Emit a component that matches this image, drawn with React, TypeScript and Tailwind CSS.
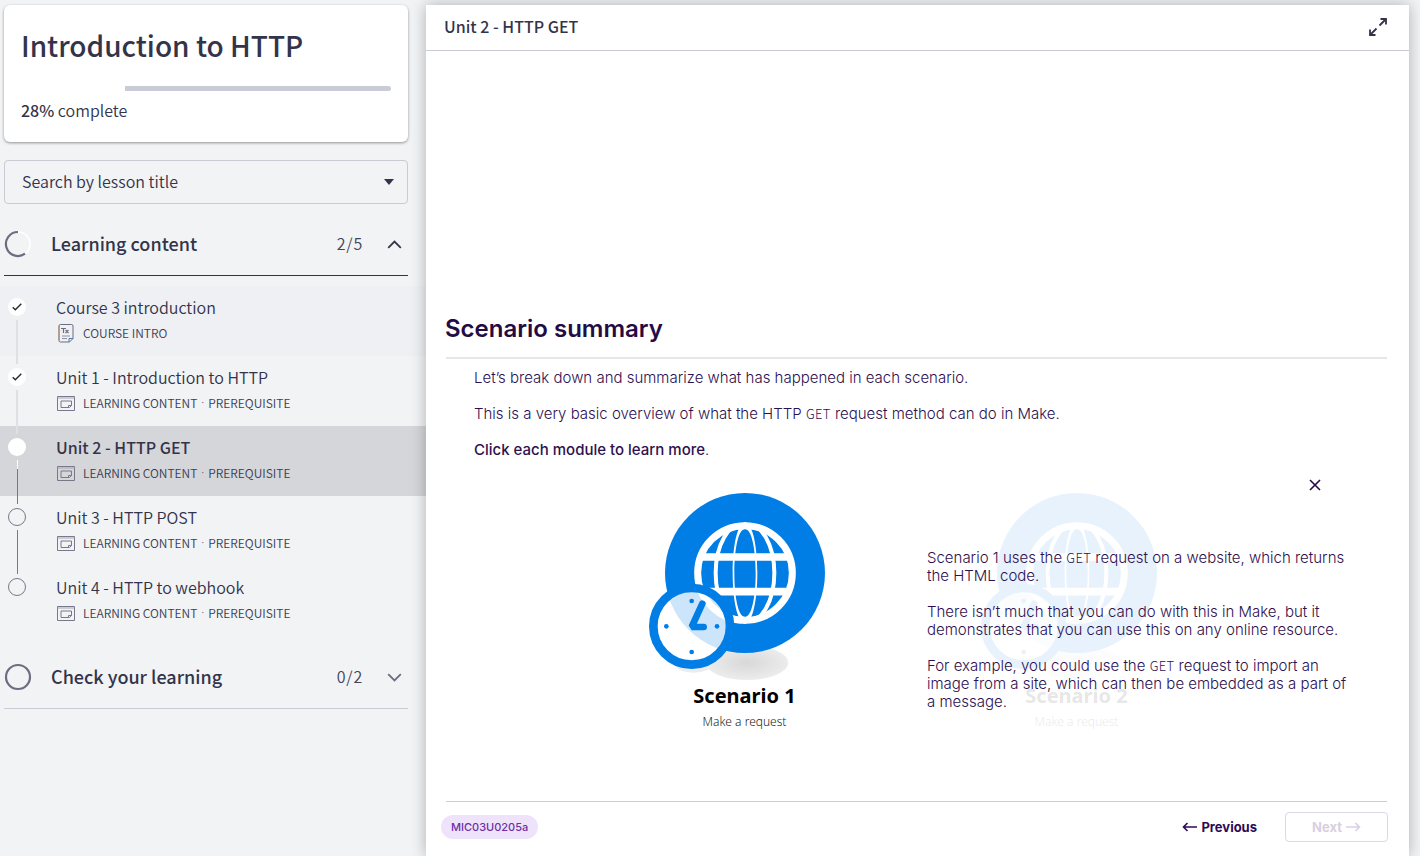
import { Fragment, useId } from "react";

type LessonState = "done" | "current" | "todo";

type Lesson = {
  title: string;
  tags: string[];
  icon: "text" | "content";
  state: LessonState;
  visited?: boolean;
};

const contentTags = ["LEARNING CONTENT", "PREREQUISITE"];

const lessons: Lesson[] = [
  { title: "Course 3 introduction", tags: ["COURSE INTRO"], icon: "text", state: "done", visited: true },
  { title: "Unit 1 - Introduction to HTTP", tags: contentTags, icon: "content", state: "done" },
  { title: "Unit 2 - HTTP GET", tags: contentTags, icon: "content", state: "current" },
  { title: "Unit 3 - HTTP POST", tags: contentTags, icon: "content", state: "todo" },
  { title: "Unit 4 - HTTP to webhook", tags: contentTags, icon: "content", state: "todo" },
];

function TextIcon() {
  return (
    <svg width="16" height="19" viewBox="0 0 16 19" fill="none" stroke="#6b6d80" aria-hidden="true">
      <path d="M2.500.5h11a1.500 1.500 0 0 1 1.500 1.500v12.500l-3.500 3.500H2.500A1.500 1.500 0 0 1 1 16.500V2A1.500 1.500 0 0 1 2.500.5z" />
      <path d="M1 2v14.500" stroke="#b98a6a" />
      <path d="M15 14.500h-4V18" stroke="#4c7fb0" />
      <path d="M3 4.500h5M5.500 4.500v4.500M7.500 6l3 3M10.500 6l-3 3" strokeWidth="1.200" />
      <path d="M4 12h8M4 14.500h5" stroke="#9293a2" />
    </svg>
  );
}

function ContentIcon() {
  return (
    <svg width="18" height="15" viewBox="0 0 18 15" fill="none" stroke="#77798b" aria-hidden="true">
      <path d="M.5.5h17v14H.5z" />
      <path d="M.5 2h17" stroke="#a5a6b3" />
      <path d="M4 5h10.500v4.500l-2 2H4zM14.500 9.500h-3v2" />
    </svg>
  );
}

function Marker({ state }: { state: LessonState }) {
  if (state === "todo") {
    return <span className="size-[18px] shrink-0 rounded-full border border-[#77798b]" />;
  }
  return (
    <span className="flex size-[18px] shrink-0 items-center justify-center rounded-full bg-white">
      {state === "done" && (
        <svg width="10" height="8" viewBox="0 0 10 8" fill="none" stroke="#26272f" strokeWidth="1.400" aria-hidden="true">
          <path d="M.7 4.300L3.300 6.700 9.300.8" />
        </svg>
      )}
    </span>
  );
}

function LessonRow({ lesson, last }: { lesson: Lesson; last: boolean }) {
  const { state } = lesson;
  const background = state === "current" ? "bg-[#d5d6da]" : lesson.visited ? "bg-[#eef0f4]" : "";
  return (
    <li className={`h-[70px] ${background}`}>
      <a href="#lesson" className="flex h-full pl-2">
        <span className="flex w-[18px] flex-col items-center gap-1 pt-3">
          <Marker state={state} />
          {!last && (
            <span className="relative z-10 flex h-[44px] w-px shrink-0 flex-col">
              {state === "done" && <span className="-ml-px w-[2px] flex-1 bg-[#dfe0e5]" />}
              {state === "current" && <span className="h-[9px] bg-white" />}
              {state !== "done" && <span className="flex-1 bg-[#77798b]" />}
            </span>
          )}
        </span>
        <span className="flex flex-col gap-1 pt-[9px] pl-[30px]">
          <span className={`text-[16px] leading-6 ${state === "current" ? "font-medium text-[#33344a]" : "font-[350] text-[#33344a]"}`}>
            {lesson.title}
          </span>
          <span className="flex h-5 items-center text-[12px] leading-4 font-[350] text-[#3c3d54]">
            <span className="mr-2 flex w-[19px] justify-center">{lesson.icon === "text" ? <TextIcon /> : <ContentIcon />}</span>
            {lesson.tags.map((tag, index) => (
              <Fragment key={tag}>
                {index > 0 && <span className="mx-1 font-['Noto_Sans',sans-serif]">·</span>}
                <span>{tag}</span>
              </Fragment>
            ))}
          </span>
        </span>
      </a>
    </li>
  );
}

function SectionHeader({ title, count, open }: { title: string; count: string; open: boolean }) {
  return (
    <button
      type="button"
      aria-expanded={open}
      className={`mr-[18px] ml-1 flex h-[63px] items-center border-b text-left ${open ? "border-[#33344a]" : "border-[#c9cbd6]"}`}
    >
      <svg width="28" height="28" viewBox="0 0 28 28" fill="none" aria-hidden="true">
        <circle cx="14" cy="14" r="12" stroke={open ? "#fff" : "#6b6d80"} strokeWidth={open ? 1.5 : 2.2} />
        {open && <path d="M14 2A12 12 0 1 0 21 23.700" stroke="#6b6d80" strokeWidth="2.200" />}
      </svg>
      <span className="ml-[19px] flex-1 pb-0.5 text-[18px] leading-6 font-medium text-[#33344a]">{title}</span>
      <span className="pb-0.5 text-[16px] leading-6 font-[350] tracking-wider text-[#43445a]">{count}</span>
      <svg className="mr-1.5 ml-6" width="15" height="9" viewBox="0 0 15 9" fill="none" stroke={open ? "#33344a" : "#6b6d80"} strokeWidth="1.800" aria-hidden="true">
        <path d={open ? "M1.200 7.800l6.300-6.300 6.300 6.300" : "M1.200 1.200l6.300 6.300 6.300-6.300"} />
      </svg>
    </button>
  );
}

function Sidebar() {
  return (
    <aside className="flex w-[426px] shrink-0 flex-col pt-[5px] font-['Noto_Sans_CJK_SC',sans-serif]">
      <div className="mr-[18px] ml-1 rounded-md bg-white px-[17px] pt-[18px] pb-5 shadow-[0_1px_3px_rgba(0,0,0,0.4)]">
        <h1 className="text-[28px] leading-[44px] font-medium text-[#33344a]">Introduction to HTTP</h1>
        <div className="mt-[19px] flex h-[5px] justify-end" role="progressbar" aria-valuenow={28} aria-valuemin={0} aria-valuemax={100}>
          <div className="w-[72%] rounded-r-full bg-[#c9cbd6]" />
        </div>
        <p className="mt-[7px] text-[16px] leading-6 font-[350] text-[#33344a]">
          <span className="font-medium">28%</span> complete
        </p>
      </div>

      <div className="relative mt-[18px] mr-[18px] ml-1">
        <select
          aria-label="Search by lesson title"
          className="h-[44px] w-full appearance-none rounded border border-[#c9cbd6] bg-transparent px-[17px] pb-[3px] text-[16px] leading-6 font-[350] text-[#33344a]"
        >
          <option>Search by lesson title</option>
          {lessons.map((lesson) => (
            <option key={lesson.title}>{lesson.title}</option>
          ))}
        </select>
        <svg className="pointer-events-none absolute top-[19px] right-3.5" width="10" height="6" viewBox="0 0 10 6" fill="#33344a" aria-hidden="true">
          <path d="M0 0h10L5 6z" />
        </svg>
      </div>

      <nav className="mt-[9px] flex flex-col" aria-label="Lessons">
        <SectionHeader title="Learning content" count="2/5" open />
        <ul className="my-[10px]">
          {lessons.map((lesson, index) => (
            <LessonRow key={lesson.title} lesson={lesson} last={index === lessons.length - 1} />
          ))}
        </ul>
        <SectionHeader title="Check your learning" count="0/2" open={false} />
      </nav>
    </aside>
  );
}

function HttpModuleArt() {
  const id = useId();
  return (
    <svg width="194" height="187" viewBox="55 39 582 561" fill="none" aria-hidden="true">
      <defs>
        <radialGradient id={`${id}shade`}>
          <stop offset="0" stopColor="#d8d8d8" />
          <stop offset="1" stopColor="#ececec" />
        </radialGradient>
        <clipPath id={`${id}globe`}>
          <circle cx="346" cy="279" r="150" />
        </clipPath>
      </defs>
      <ellipse cx="352" cy="548" rx="124" ry="52" fill={`url(#${id}shade)`} />
      <ellipse cx="192" cy="556" rx="54" ry="22" fill="#ececec" />
      <circle cx="346" cy="279" r="240" fill="#007ee5" />
      <g stroke="#fff" clipPath={`url(#${id}globe)`}>
        <path d="M200 231h292M200 335h292" strokeWidth="23" />
        <path d="M346 126C296 130 258 195 258 279s38 149 88 153M346 126c50 4 88 69 88 153s-38 149-88 153" strokeWidth="12" />
      </g>
      <path
        d="M346 126C322 132 309 200 309 279s13 147 37 153c24-6 37-74 37-153s-13-147-37-153zM346 147c20 0 32 60 32 132s-12 132-32 132-32-60-32-132 12-132 32-132z"
        fill="#fff"
        fillRule="evenodd"
      />
      <circle cx="346" cy="279" r="142" stroke="#fff" strokeWidth="21" />
      <circle cx="186" cy="439" r="105" fill="#fff" fillOpacity="0.8" />
      <circle cx="186" cy="439" r="115" stroke="#007ee5" strokeWidth="26" />
      <g fill="#007ee5">
        <circle cx="186" cy="363" r="7" />
        <circle cx="262" cy="439" r="7" />
        <circle cx="186" cy="516" r="7" />
        <circle cx="110" cy="439" r="7" />
      </g>
      <path d="M218 371l-32 70h36" stroke="#007ee5" strokeWidth="20" strokeLinecap="round" strokeLinejoin="bevel" />
    </svg>
  );
}

function ScenarioModule({ name, faded }: { name: string; faded?: boolean }) {
  return (
    <button type="button" className={`flex w-[194px] flex-col items-center font-['Noto_Sans',sans-serif] ${faded ? "opacity-[0.09]" : ""}`}>
      <HttpModuleArt />
      <span className="mt-1 text-[20px] leading-6 font-bold text-black">{name}</span>
      <span className="mt-1 text-[12px] leading-5 text-[#222]">Make a request</span>
    </button>
  );
}

function Get() {
  return <code className="font-['Noto_Sans_CJK_SC',monospace] text-[13px] leading-none tracking-wide">GET</code>;
}

export default function App() {
  return (
    <div className="flex min-h-screen bg-[#f1f3f5]">
      <Sidebar />
      <main className="mt-[5px] mr-[11px] flex min-w-0 flex-1 flex-col bg-white shadow-[0_0_14px_rgba(0,0,0,0.28)]">
        <header className="flex h-[46px] items-center justify-between border-b border-[#c9cbd6] pr-[22px] pb-0.5 pl-[18px]">
          <h2 className="pb-0.5 font-['Noto_Sans_CJK_SC',sans-serif] text-[16px] leading-6 font-medium text-[#33344a]">Unit 2 - HTTP GET</h2>
          <button type="button" aria-label="Full screen">
            <svg width="18" height="18" viewBox="0 0 18 18" fill="none" stroke="#33344a" strokeWidth="1.800" aria-hidden="true">
              <path d="M10.500 7.500L16.500 1.500M11.500 1H17v5.500M7.500 10.500L1.500 16.500M1 11.500V17h5.500" />
            </svg>
          </button>
        </header>

        <article className="flex flex-1 flex-col pr-[22px] pl-5 font-['Inter',sans-serif] text-[15px] leading-[18px] font-light text-[#2d1050]">
          <h3 className="-ml-px mt-[262px] text-[24px] leading-8 font-semibold text-[#250b45]">Scenario summary</h3>
          <hr className="mt-3 border-t-2 border-[#e8e4e8]" />
          <div className="mt-[10px] flex flex-col gap-[18px] pl-7">
            <p>Let’s break down and summarize what has happened in each scenario.</p>
            <p>
              This is a very basic overview of what the HTTP <Get /> request method can do in Make.
            </p>
            <p>
              <strong className="font-medium">Click each module to learn more</strong>.
            </p>
          </div>

          <div className="relative mt-[34px] flex justify-center gap-[138px] pr-3">
            <ScenarioModule name="Scenario 1" />
            <ScenarioModule name="Scenario 2" faded />
            <section className="absolute -top-4 right-0 flex w-[460px] flex-col pr-[35px]">
              <button type="button" aria-label="Close" className="mr-[29px] self-end p-0.5">
                <svg width="12" height="12" viewBox="0 0 12 12" stroke="#250b45" strokeWidth="1.600" aria-hidden="true">
                  <path d="M1 1l10 10M11 1L1 11" />
                </svg>
              </button>
              <div className="mt-14 flex flex-col gap-[18px]">
                <p>
                  Scenario 1 uses the <Get /> request on a website, which returns the HTML code.
                </p>
                <p>There isn’t much that you can do with this in Make, but it demonstrates that you can use this on any online resource.</p>
                <p>
                  For example, you could use the <Get /> request to import an image from a site, which can then be embedded as a part of a message.
                </p>
              </div>
            </section>
          </div>

          <footer className="mt-auto flex h-[55px] items-center border-t border-[#cfcdd2] pb-1 text-[13px] font-bold">
            <span className="-ml-[5px] rounded-full bg-[#efe3fb] px-[10px] py-[3px] text-[11px] font-medium text-[#6c2fa7]">MIC03U0205a</span>
            <button type="button" className="mr-[28px] ml-auto flex items-center gap-1 text-[#2c0a55]">
              <svg width="15" height="10" viewBox="0 0 15 10" fill="none" stroke="currentColor" strokeWidth="1.600" aria-hidden="true">
                <path d="M15 5H1.500M5.500 1l-4 4 4 4" />
              </svg>
              Previous
            </button>
            <button type="button" disabled className="-mr-px flex h-[30px] w-[103px] items-center justify-center gap-1 rounded border border-[#dcd8e6] text-[#d9cfe2]">
              Next
              <svg width="15" height="10" viewBox="0 0 15 10" fill="none" stroke="currentColor" strokeWidth="1.600" aria-hidden="true">
                <path d="M0 5h13.500M9.500 1l4 4-4 4" />
              </svg>
            </button>
          </footer>
        </article>
      </main>
    </div>
  );
}
